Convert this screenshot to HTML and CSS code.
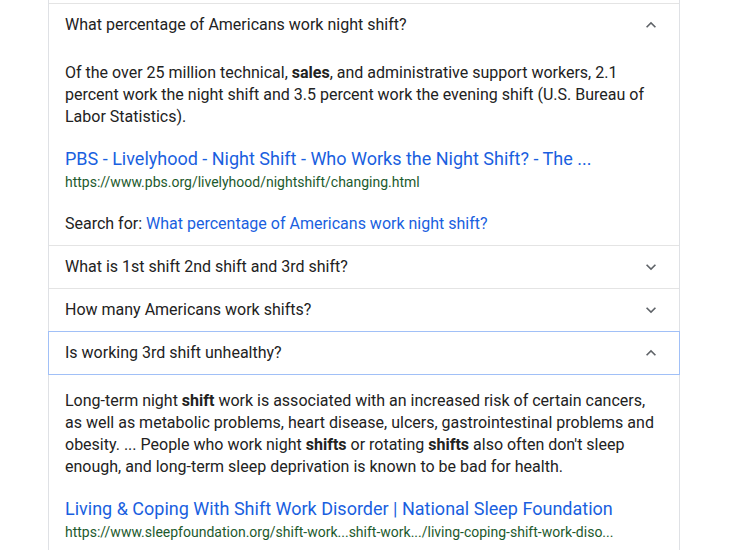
FILE: index.html
```html
<!DOCTYPE html>
<html>
<head>
<meta charset="utf-8">
<link rel="stylesheet" href="styles.css">
</head>
<body>
<div class="list">
  <div class="spacer"></div>
  <div class="item">
    <div class="q">
      <span>What percentage of Americans work night shift?</span>
      <svg class="chev" viewBox="0 0 24 24" width="20" height="20"><path d="M12 8l-6 6 1.41 1.41L12 10.83l4.59 4.58L18 14z"/></svg>
    </div>
    <div class="a">
      <p class="text">Of the over 25 million technical, <b>sales</b>, and administrative support workers, 2.1 percent work the night shift and 3.5 percent work the evening shift (U.S. Bureau of Labor Statistics).</p>
      <a class="title" href="#">PBS - Livelyhood - Night Shift - Who Works the Night Shift? - The ...</a>
      <div class="url">https://www.pbs.org/livelyhood/nightshift/changing.html</div>
      <div class="search">Search for: <a href="#">What percentage of Americans work night shift?</a></div>
    </div>
  </div>
  <div class="item">
    <div class="q">
      <span>What is 1st shift 2nd shift and 3rd shift?</span>
      <svg class="chev" viewBox="0 0 24 24" width="20" height="20"><path d="M16.59 8.59L12 13.17 7.41 8.59 6 10l6 6 6-6z"/></svg>
    </div>
  </div>
  <div class="item">
    <div class="q">
      <span>How many Americans work shifts?</span>
      <svg class="chev" viewBox="0 0 24 24" width="20" height="20"><path d="M16.59 8.59L12 13.17 7.41 8.59 6 10l6 6 6-6z"/></svg>
    </div>
  </div>
  <div class="item">
    <div class="q focus">
      <span>Is working 3rd shift unhealthy?</span>
      <svg class="chev" viewBox="0 0 24 24" width="20" height="20"><path d="M12 8l-6 6 1.41 1.41L12 10.83l4.59 4.58L18 14z"/></svg>
    </div>
    <div class="a a2">
      <p class="text">Long-term night <b>shift</b> work is associated with an increased risk of certain cancers, as well as metabolic problems, heart disease, ulcers, gastrointestinal problems and obesity. ... People who work night <b>shifts</b> or rotating <b>shifts</b> also often don't sleep enough, and long-term sleep deprivation is known to be bad for health.</p>
      <a class="title" href="#">Living &amp; Coping With Shift Work Disorder | National Sleep Foundation</a>
      <div class="url">https://www.sleepfoundation.org/shift-work...shift-work.../living-coping-shift-work-diso...</div>
    </div>
  </div>
</div>
</body>
</html>
```

FILE: styles.css
```css
html, body {
  margin: 0;
  padding: 0;
  background: #fff;
}
body {
  font-family: Roboto, "Liberation Sans", Arial, sans-serif;
  color: #222;
  height: 550px;
  overflow: hidden;
}
.list {
  margin-left: 48px;
  width: 630px;
  border-left: 1px solid #dfe1e5;
  border-right: 1px solid #dfe1e5;
  min-height: 600px;
}
.spacer {
  height: 3px;
}
.item {
  border-top: 1px solid #e4e4e4;
}
.q {
  height: 42px;
  display: flex;
  align-items: center;
  justify-content: space-between;
  padding: 0 18px 0 16px;
  font-size: 16px;
  color: #222;
}
.q span {
  line-height: 20px;
}
.q.focus {
  height: 42px;
  margin: -1px -1px 0;
  border: 1px solid #a1c0f7;
  padding: 0 18px 0 16px;
  position: relative;
}
.chev {
  fill: #5f6368;
  flex: none;
}
.a {
  padding: 16px 16px 10px;
}
.a2 {
  padding-top: 15px;
}
.text {
  margin: 0;
  font-size: 16px;
  line-height: 22px;
  color: #222;
}
.text b {
  font-weight: 700;
}
.title {
  display: block;
  margin-top: 19px;
  font-size: 18px;
  line-height: 24px;
  color: #1a5fe0;
  text-decoration: none;
}
.url {
  font-size: 14px;
  line-height: 20px;
  color: #1d5a2d;
  margin-top: 1px;
}
.search {
  margin-top: 21px;
  font-size: 16px;
  line-height: 22px;
  color: #222;
}
.search a {
  color: #1a5fe0;
  text-decoration: none;
}
```
